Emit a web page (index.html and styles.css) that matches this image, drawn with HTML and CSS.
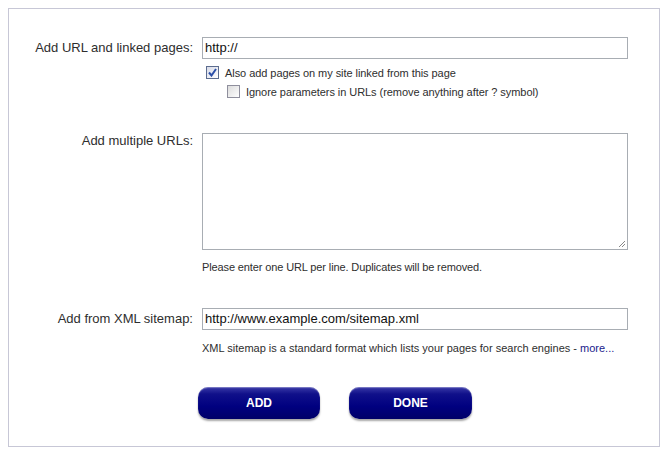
FILE: index.html
```html
<!DOCTYPE html>
<html>
<head>
<meta charset="utf-8">
<link rel="stylesheet" href="styles.css">
</head>
<body>
<div class="panel">
  <div class="row row-url">
    <div class="label label-input">Add URL and linked pages:</div>
    <div class="field">
      <div class="textbox">http://</div>
      <div class="check-line first">
        <span class="cb checked"><svg width="9" height="9" viewBox="0 0 9 9"><path d="M1 4.5 L3.5 7.5 L8 1" fill="none" stroke="#2b4fa8" stroke-width="2"/></svg></span>
        <span class="check-text">Also add pages on my site linked from this page</span>
      </div>
      <div class="check-line indent">
        <span class="cb"></span>
        <span class="check-text">Ignore parameters in URLs (remove anything after ? symbol)</span>
      </div>
    </div>
  </div>

  <div class="row row-multi">
    <div class="label label-area">Add multiple URLs:</div>
    <div class="field">
      <div class="textarea"><svg class="grip" width="8" height="8" viewBox="0 0 8 8"><path d="M7 1 L1 7 M7 4 L4 7" stroke="#888" stroke-width="1" fill="none"/></svg></div>
      <div class="hint hint-multi">Please enter one URL per line. Duplicates will be removed.</div>
    </div>
  </div>

  <div class="row row-xml">
    <div class="label label-input">Add from XML sitemap:</div>
    <div class="field">
      <div class="textbox">http://www.example.com/sitemap.xml</div>
      <div class="hint hint-xml">XML sitemap is a standard format which lists your pages for search engines - <span class="more">more...</span></div>
    </div>
  </div>

  <div class="buttons">
    <div class="btn">ADD</div>
    <div class="btn btn-done">DONE</div>
  </div>
</div>
</body>
</html>
```
FILE: styles.css
```css
html, body {
  margin: 0;
  padding: 0;
  background: #ffffff;
}
body {
  padding: 8px;
  font-family: "Liberation Sans", Arial, sans-serif;
  color: #333333;
}
.panel {
  width: 650px;
  height: 437px;
  border: 1px solid #c7c7d6;
  box-sizing: content-box;
}
.row {
  display: grid;
  grid-template-columns: 184px 426px;
  column-gap: 9px;
}
.row-url { margin-top: 28px; }
.row-multi { margin-top: 32px; }
.row-xml { margin-top: 34px; }
.label {
  font-size: 13px;
  text-align: right;
  color: #2e2e2e;
}
.label-input {
  line-height: 22px;
}
.label-area {
  line-height: 15px;
}
.field {
  display: flex;
  flex-direction: column;
}
.textbox {
  height: 20px;
  border: 1px solid #a8adb3;
  font-size: 13px;
  line-height: 20px;
  padding-left: 2px;
  color: #111111;
  background: #fff;
}
.check-line {
  display: flex;
  align-items: center;
  height: 19px;
  font-size: 11px;
  padding-left: 4px;
}
.check-line.first { margin-top: 4px; }
.check-line.indent { padding-left: 25px; }
.cb {
  width: 11px;
  height: 11px;
  border: 1px solid #8f8f9d;
  background: linear-gradient(135deg, #dcdcdc 0%, #f4f4f4 70%, #ffffff 100%);
  display: flex;
  align-items: center;
  justify-content: center;
  flex: none;
}
.cb.checked {
  border-color: #5c6c8f;
  background: linear-gradient(135deg, #d8dbe8 0%, #f2f3f7 70%, #ffffff 100%);
}
.check-text {
  margin-left: 6px;
  color: #2e2e2e;
  letter-spacing: -0.06px;
}
.textarea {
  height: 115px;
  border: 1px solid #a8adb3;
  position: relative;
  background: #fff;
}
.grip {
  position: absolute;
  right: 1px;
  bottom: 1px;
}
.hint {
  font-size: 11px;
  line-height: 14px;
  color: #2e2e2e;
}
.hint-multi { margin-top: 10px; letter-spacing: -0.12px; }
.hint-xml { margin-top: 11px; }
.more { color: #1a1a8c; }
.buttons {
  display: flex;
  margin-top: 32px;
  margin-left: 189px;
  gap: 29px;
}
.btn {
  width: 122px;
  height: 32px;
  border-radius: 10px;
  background: linear-gradient(180deg, #3a3aa8 0%, #10108a 22%, #000080 60%, #000068 100%);
  box-shadow: 0 2px 2px rgba(0, 0, 0, 0.35), inset 0 1px 1px rgba(255, 255, 255, 0.35);
  color: #ffffff;
  font-weight: bold;
  font-size: 12px;
  display: flex;
  align-items: center;
  justify-content: center;
  box-sizing: border-box;
}
.btn-done { width: 123px; }
```
